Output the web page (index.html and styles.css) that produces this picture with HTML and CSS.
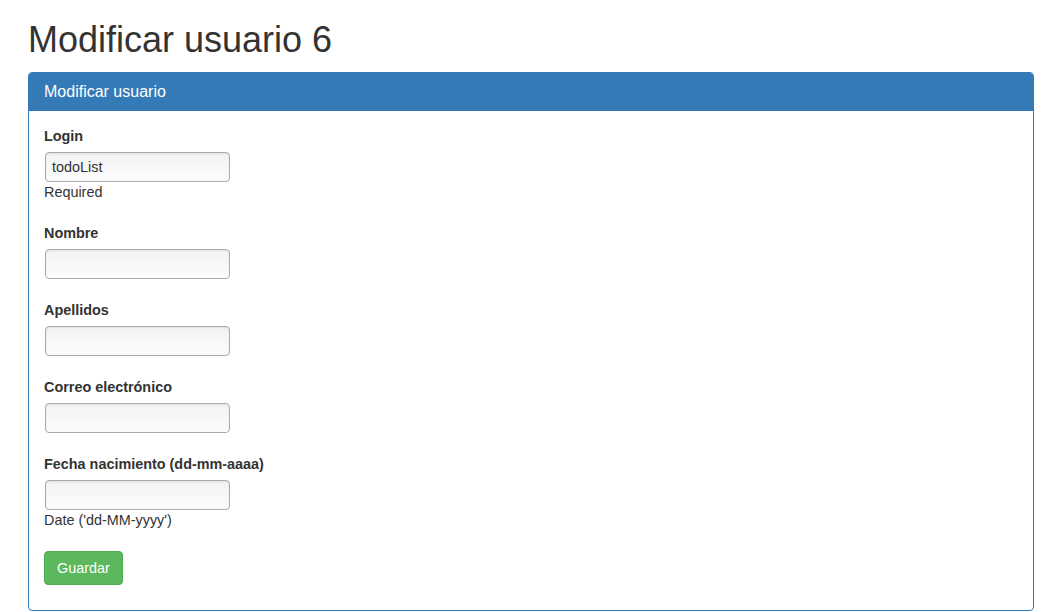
FILE: index.html
```html
<!DOCTYPE html>
<html lang="es">
<head>
<meta charset="utf-8">
<title>Modificar usuario 6</title>
<link rel="stylesheet" href="styles.css">
</head>
<body>
<div class="page">
  <h1 class="title">Modificar usuario 6</h1>
  <div class="panel">
    <div class="panel-heading">
      <h3 class="panel-title">Modificar usuario</h3>
    </div>
    <form class="panel-body">
      <div class="form-group">
        <label class="label" for="login">Login</label>
        <input class="input" id="login" type="text" value="todoList">
        <span class="help">Required</span>
      </div>
      <div class="form-group">
        <label class="label" for="nombre">Nombre</label>
        <input class="input" id="nombre" type="text">
      </div>
      <div class="form-group">
        <label class="label" for="apellidos">Apellidos</label>
        <input class="input" id="apellidos" type="text">
      </div>
      <div class="form-group">
        <label class="label" for="correo">Correo electrónico</label>
        <input class="input" id="correo" type="text">
      </div>
      <div class="form-group">
        <label class="label" for="fecha">Fecha nacimiento (dd-mm-aaaa)</label>
        <input class="input" id="fecha" type="text">
        <span class="help">Date ('dd-MM-yyyy')</span>
      </div>
      <div class="actions">
        <button class="btn-success" type="button">Guardar</button>
      </div>
    </form>
  </div>
</div>
</body>
</html>
```

FILE: styles.css
```css
* { box-sizing: border-box; }

html, body {
  margin: 0;
  padding: 0;
  background: #fff;
}

body {
  font-family: "Liberation Sans", Arial, Helvetica, sans-serif;
  font-size: 14px;
  line-height: 20px;
  color: #333;
}

.page {
  padding: 0 11px 0 28px;
}

.title {
  margin: 20px 0 12px;
  font-size: 36px;
  font-weight: 400;
  line-height: 39.6px;
  color: #333;
}

.panel {
  border: 1px solid #337ab7;
  border-radius: 4px;
  background: #fff;
}

.panel-heading {
  background: #337ab7;
  color: #fff;
  padding: 10px 15px;
  border-bottom: 1px solid #337ab7;
  border-radius: 3px 3px 0 0;
}

.panel-title {
  margin: 0;
  font-size: 16px;
  font-weight: 400;
  line-height: 17.6px;
}

.panel-body {
  margin: 0;
  padding: 15px;
  display: flex;
  flex-direction: column;
}

.form-group {
  display: flex;
  flex-direction: column;
  align-items: flex-start;
  margin-bottom: 21px;
}

.label {
  display: block;
  font-size: 14.4px;
  font-weight: 700;
  line-height: 20px;
  margin-bottom: 6px;
}

.input {
  display: block;
  width: 185px;
  height: 30px;
  margin: 0 0 0 1px;
  padding: 4px 6px;
  font-family: "Liberation Sans", Arial, Helvetica, sans-serif;
  font-size: 14.4px;
  line-height: 20px;
  color: #333;
  border: 1px solid #aaa;
  border-radius: 4px;
  background: linear-gradient(#f3f3f3, #fcfcfc);
  box-shadow: inset 0 1px 2px rgba(0, 0, 0, 0.08);
  outline: none;
}

.help {
  display: block;
  font-size: 14.4px;
  line-height: 20px;
  color: #333;
}

.actions {
  margin-bottom: 10px;
}

.btn-success {
  display: inline-block;
  width: 79px;
  height: 34px;
  padding: 6px 0;
  font-family: "Liberation Sans", Arial, Helvetica, sans-serif;
  font-size: 14.4px;
  line-height: 20px;
  text-align: center;
  color: #fff;
  background: #5cb85c;
  border: 1px solid #4cae4c;
  border-radius: 4px;
  cursor: pointer;
}
```
